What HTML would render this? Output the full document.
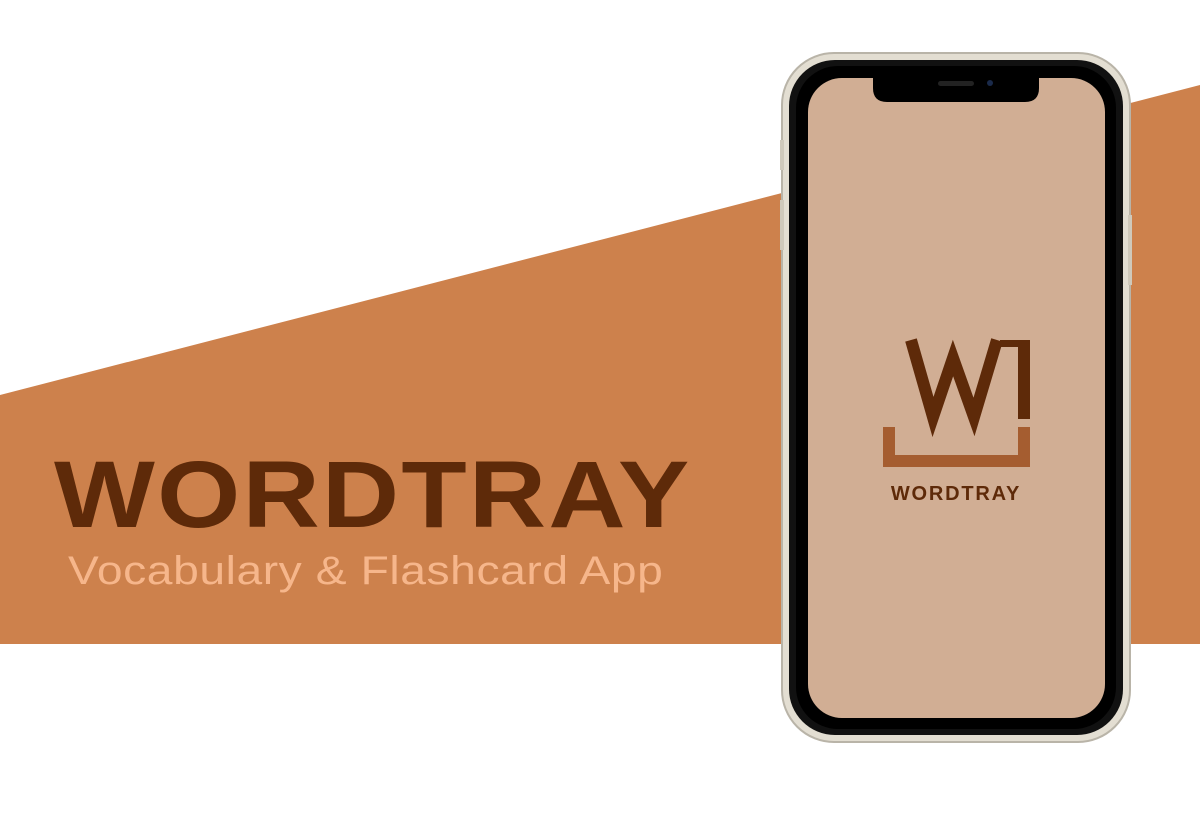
<!DOCTYPE html>
<html><head><style>
html,body{margin:0;padding:0;width:1200px;height:816px;overflow:hidden;background:#fff;font-family:"Liberation Sans",sans-serif;}
.t1{position:absolute;left:54px;top:448px;font-size:95px;font-weight:bold;color:#5E2A09;letter-spacing:2px;transform:scaleX(1.125);transform-origin:left top;line-height:1;}
.t2{position:absolute;left:68px;top:551px;font-size:40px;color:#F6B68B;line-height:1;letter-spacing:0.5px;transform:scaleX(1.155);transform-origin:left top;}
</style></head><body>
<svg width="1200" height="816" style="position:absolute;left:0;top:0">
<polygon points="0,395 1200,85 1200,644 0,644" fill="#CD814C"/>
<rect x="782" y="53" width="348" height="689" rx="52" fill="#E3DED2" stroke="#B9B4A8" stroke-width="2"/>
<rect x="780" y="140" width="4" height="30" fill="#CFC9BB"/>
<rect x="780" y="200" width="4" height="50" fill="#CFC9BB"/>
<rect x="1128" y="215" width="4" height="70" fill="#CFC9BB"/>
<rect x="789" y="60" width="334" height="675" rx="46" fill="#111"/>
<rect x="796" y="66" width="320" height="663" rx="42" fill="#000"/>
<rect x="808" y="78" width="297" height="640" rx="34" fill="#D1AE94"/>
<path d="M873 78 L1039 78 L1039 88 Q1039 102 1025 102 L887 102 Q873 102 873 88 Z" fill="#000"/>
<rect x="938" y="81" width="36" height="5" rx="2.5" fill="#222"/>
<circle cx="990" cy="83" r="3" fill="#1a2a4a"/>
<polyline points="911,340 933,417 953,358 974,417 997,340" fill="none" stroke="#5E2A09" stroke-width="12" stroke-linejoin="miter"/>
<path d="M1000 340 H1030 V419 H1018 V347 H1000 Z" fill="#5E2A09"/>
<path d="M883 427 H895 V455 H1018 V427 H1030 V467 H883 Z" fill="#A55D30"/>
<text x="956" y="500" text-anchor="middle" font-family="Liberation Sans" font-weight="bold" font-size="20" fill="#5E2A09" letter-spacing="1.8">WORDTRAY</text>
</svg>
<div class="t1">WORDTRAY</div>
<div class="t2">Vocabulary &amp; Flashcard App</div>
</body></html>
